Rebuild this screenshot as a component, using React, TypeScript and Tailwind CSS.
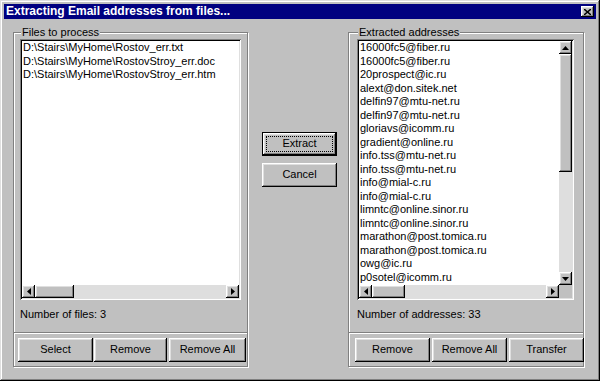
import React from "react";

const RAISED =
  "bg-[#c0c0c0] shadow-[inset_-1px_-1px_#000,inset_1px_1px_#fff,inset_-2px_-2px_#808080,inset_2px_2px_#dfdfdf]";
const SUNKEN =
  "bg-white shadow-[inset_1px_1px_#808080,inset_-1px_-1px_#fff,inset_2px_2px_#000,inset_-2px_-2px_#dfdfdf]";
const ETCHED = "border border-[#808080] shadow-[inset_1px_1px_#fff,1px_1px_#fff]";

function Arrow({ dir }: { dir: "up" | "down" | "left" | "right" }) {
  const pts: Record<string, string> = {
    up: "3.5,0 7,4 0,4",
    down: "0,0 7,0 3.5,4",
    left: "4,0 4,7 0,3.5",
    right: "0,0 4,3.5 0,7",
  };
  const vertical = dir === "up" || dir === "down";
  return (
    <svg width={vertical ? 7 : 4} height={vertical ? 4 : 7} viewBox={vertical ? "0 0 7 4" : "0 0 4 7"}>
      <polygon points={pts[dir]} fill="#000" />
    </svg>
  );
}

function ScrollBtn({ dir, w, h }: { dir: "up" | "down" | "left" | "right"; w: string; h: string }) {
  return (
    <div className={`${RAISED} ${w} ${h} flex items-center justify-center shrink-0`}>
      <Arrow dir={dir} />
    </div>
  );
}

function HScroll({ thumb }: { thumb: string }) {
  return (
    <div className="flex h-[13px] w-full bg-[#dedede] shrink-0">
      <ScrollBtn dir="left" w="w-[13px]" h="h-[13px]" />
      <div className={`${RAISED} ${thumb} h-[13px] shrink-0`} />
      <div className="flex-1" />
      <ScrollBtn dir="right" w="w-[13px]" h="h-[13px]" />
    </div>
  );
}

function Button({
  label,
  w,
  isDefault,
}: {
  label: string;
  w: string;
  isDefault?: boolean;
}) {
  if (isDefault) {
    return (
      <div className={`${w} h-[24px] border border-black shrink-0`}>
        <div
          className={`${RAISED} w-full h-full flex items-center justify-center p-[3px]`}
        >
          <div className="w-full h-full border border-dotted border-[#000] flex items-center justify-center">
            {label}
          </div>
        </div>
      </div>
    );
  }
  return (
    <div className={`${RAISED} ${w} h-[24px] flex items-center justify-center shrink-0`}>{label}</div>
  );
}

const files = [
  "D:\\Stairs\\MyHome\\Rostov_err.txt",
  "D:\\Stairs\\MyHome\\RostovStroy_err.doc",
  "D:\\Stairs\\MyHome\\RostovStroy_err.htm",
];

const addresses = [
  "16000fc5@fiber.ru",
  "16000fc5@fiber.ru",
  "20prospect@ic.ru",
  "alext@don.sitek.net",
  "delfin97@mtu-net.ru",
  "delfin97@mtu-net.ru",
  "gloriavs@icomm.ru",
  "gradient@online.ru",
  "info.tss@mtu-net.ru",
  "info.tss@mtu-net.ru",
  "info@mial-c.ru",
  "info@mial-c.ru",
  "limntc@online.sinor.ru",
  "limntc@online.sinor.ru",
  "marathon@post.tomica.ru",
  "marathon@post.tomica.ru",
  "owg@ic.ru",
  "p0sotel@icomm.ru",
];

export default function App() {
  return (
    <div
      className="w-[600px] h-[381px] bg-[#c0c0c0] p-[4px] flex flex-col text-[11px] leading-[13.5px] text-black overflow-hidden shadow-[inset_-1px_-1px_#000,inset_1px_1px_#dfdfdf,inset_-2px_-2px_#808080,inset_2px_2px_#fff]"
      style={{ fontFamily: '"Liberation Sans", Arial, sans-serif' }}
    >
      {/* Title bar */}
      <div className="h-[15px] bg-[#000080] flex items-center justify-between pl-[2px] pr-[2px] shrink-0">
        <span className="text-white font-bold text-[12px] leading-[15px]">
          Extracting Email addresses from files...
        </span>
        <div className={`${RAISED} w-[13px] h-[11px] flex items-center justify-center`}>
          <svg width="7" height="6" viewBox="0 0 7 6">
            <path d="M0 0 L7 6 M7 0 L0 6" stroke="#000" strokeWidth="1.5" />
          </svg>
        </div>
      </div>

      {/* Body */}
      <div className="flex pt-[13px] pl-[9px]">
        {/* Left group */}
        <div className={`${ETCHED} relative w-[235px] flex flex-col shrink-0`}>
          <span className="absolute left-[7px] top-[-7px] bg-[#c0c0c0] px-[1px] leading-[13px]">
            Files to process
          </span>
          <div className="pt-[6px] pl-[6px]">
            <div className={`${SUNKEN} w-[221px] h-[261px] p-[2px] flex flex-col`}>
              <div className="flex-1 pl-[1px] overflow-hidden">
                {files.map((f, i) => (
                  <div key={i} className="whitespace-nowrap">
                    {f}
                  </div>
                ))}
              </div>
              <HScroll thumb="w-[39px]" />
            </div>
            <div className="mt-[7px] leading-[14px]">Number of files: 3</div>
          </div>
          <div className="mt-[11px] h-[2px] border-t border-[#808080] border-b-white border-b" />
          <div className="flex pl-[4px] mt-[4px] pb-[4px]">
            <Button label="Select" w="w-[75px]" />
            <div className="w-[1px]" />
            <Button label="Remove" w="w-[73px]" />
            <div className="w-[2px]" />
            <Button label="Remove All" w="w-[77px]" />
          </div>
        </div>

        {/* Middle */}
        <div className="w-[100px] shrink-0 pl-[14px] pt-[100px] flex flex-col gap-[7px]">
          <Button label="Extract" w="w-[75px]" isDefault />
          <Button label="Cancel" w="w-[75px]" />
        </div>

        {/* Right group */}
        <div className={`${ETCHED} relative w-[236px] flex flex-col shrink-0`}>
          <span className="absolute left-[9px] top-[-7px] bg-[#c0c0c0] px-[1px] leading-[13px]">
            Extracted addresses
          </span>
          <div className="pt-[6px] pl-[8px]">
            <div className={`${SUNKEN} w-[217px] h-[261px] p-[2px] flex flex-col`}>
              <div className="flex flex-1 min-h-0">
                <div className="flex-1 pl-[1px] overflow-hidden">
                  {addresses.map((a, i) => (
                    <div key={i} className="whitespace-nowrap">
                      {a}
                    </div>
                  ))}
                </div>
                <div className="w-[13px] flex flex-col bg-[#dedede] shrink-0">
                  <ScrollBtn dir="up" w="w-[13px]" h="h-[13px]" />
                  <div className={`${RAISED} w-[13px] h-[118px] shrink-0`} />
                  <div className="flex-1" />
                  <ScrollBtn dir="down" w="w-[13px]" h="h-[13px]" />
                </div>
              </div>
              <div className="flex">
                <div className="flex-1">
                  <HScroll thumb="w-[33px]" />
                </div>
                <div className="w-[13px] h-[13px] bg-[#c0c0c0] shrink-0" />
              </div>
            </div>
            <div className="mt-[7px] leading-[14px]">Number of addresses: 33</div>
          </div>
          <div className="mt-[11px] h-[2px] border-t border-[#808080] border-b-white border-b" />
          <div className="flex pl-[6px] mt-[4px] pb-[4px] gap-[2px]">
            <Button label="Remove" w="w-[75px]" />
            <Button label="Remove All" w="w-[75px]" />
            <Button label="Transfer" w="w-[75px]" />
          </div>
        </div>
      </div>
    </div>
  );
}
